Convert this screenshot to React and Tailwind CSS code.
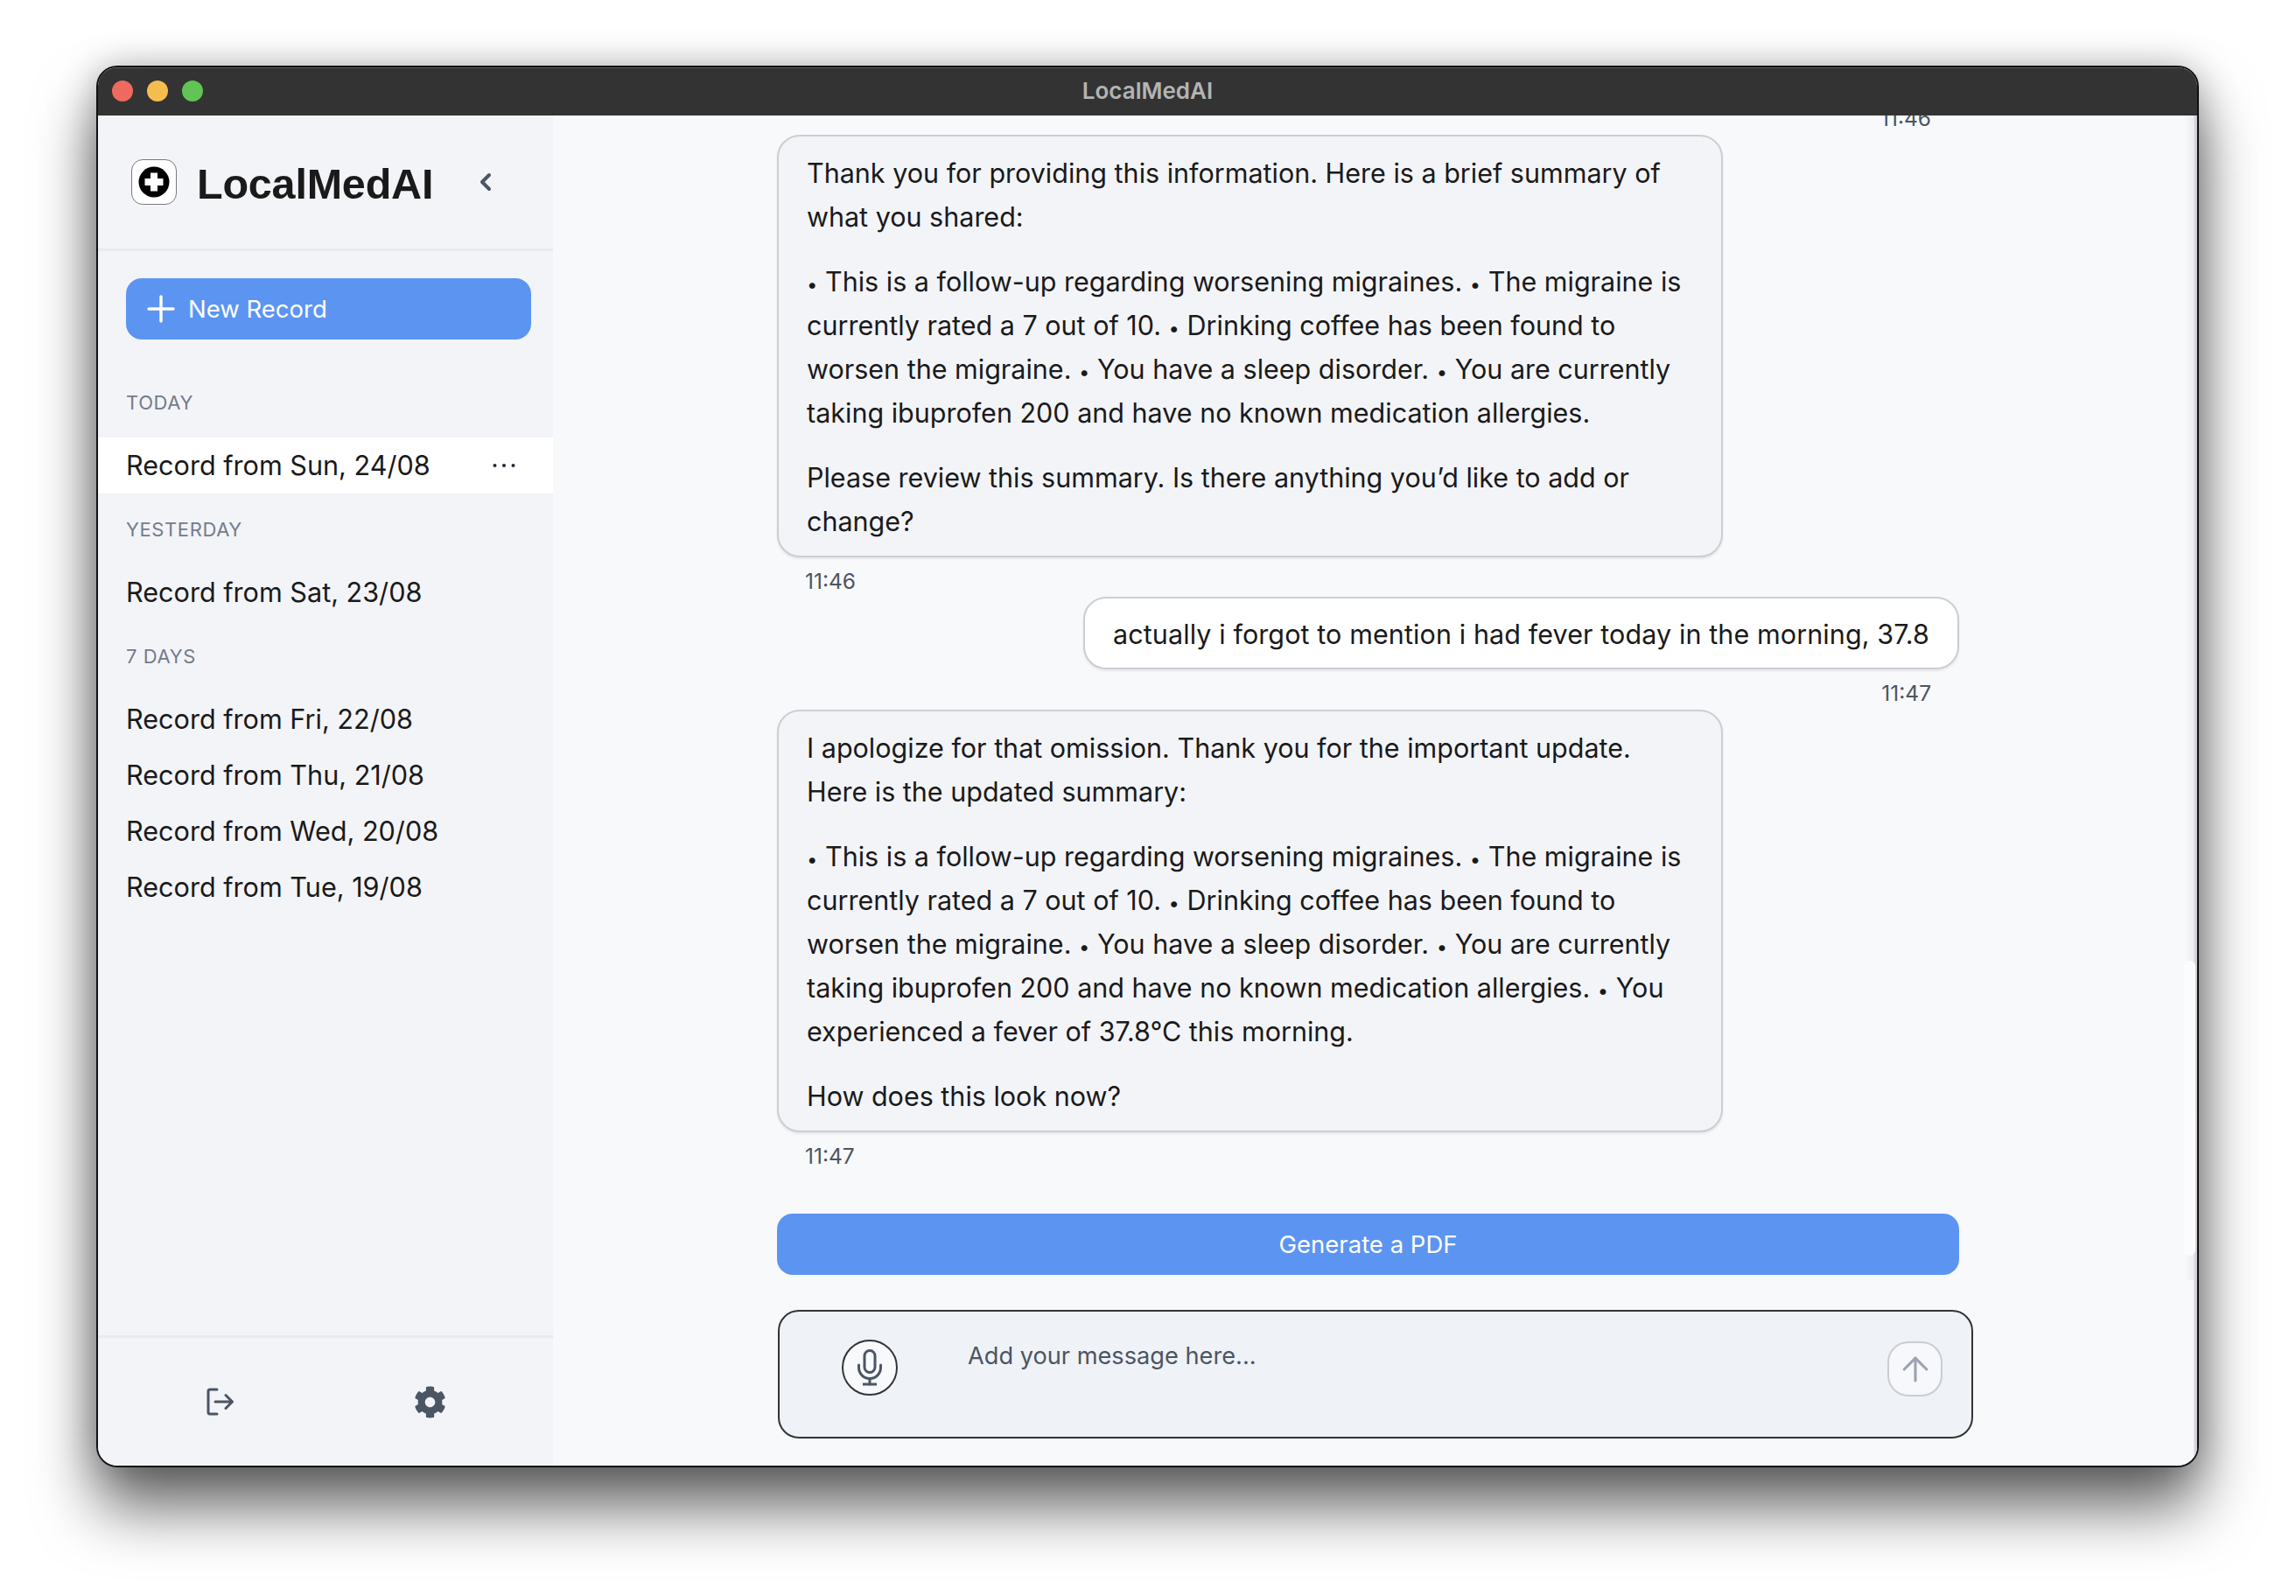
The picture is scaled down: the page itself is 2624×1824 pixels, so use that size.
import React from "react";
import { ArrowUp, Plus, ChevronLeft } from "lucide-react";
import { FaCog } from "react-icons/fa";

const FONT = "font-['Inter','Noto_Sans',sans-serif]";

function Logo() {
  return (
    <div className="flex h-[52px] w-[52px] shrink-0 items-center justify-center rounded-[13px] border border-[#77797d] bg-white">
      <svg width="36" height="36" viewBox="0 0 36 36">
        <circle cx="18" cy="18" r="17.5" fill="#000" />
        <path d="M14 7.5h8V14h6.5v8H22v6.5h-8V22H7.5v-8H14z" fill="#fff" />
      </svg>
    </div>
  );
}

function LogoutIcon() {
  return (
    <svg width="31" height="32" viewBox="0 0 31 32" fill="none" stroke="#4b5563" strokeWidth="3" strokeLinecap="round" strokeLinejoin="round">
      <path d="M12 2H4a2 2 0 0 0-2 2v24a2 2 0 0 0 2 2h8" />
      <path d="M10 16h19.5M22 8.5 29.5 16 22 23.5" />
    </svg>
  );
}

function MicIcon() {
  return (
    <svg width="28" height="42" viewBox="0 0 28 42" fill="none" stroke="#4b5563" strokeWidth="3" strokeLinecap="round">
      <rect x="8" y="1.5" width="12" height="25" rx="6" />
      <path d="M1.5 18v3a12.5 12.5 0 0 0 25 0v-3" />
      <path d="M14 34v6" />
      <path d="M6 40h16" strokeLinecap="butt" />
    </svg>
  );
}

function Dots() {
  return (
    <svg width="26" height="6" viewBox="0 0 26 6" fill="#1f2937">
      <circle cx="2.5" cy="3" r="2" />
      <circle cx="13" cy="3" r="2" />
      <circle cx="23.5" cy="3" r="2" />
    </svg>
  );
}

function GroupLabel({ children }) {
  return (
    <div className="flex h-[81px] items-center pl-[32px] text-[22px] leading-[30px] tracking-[0.6px] text-[#747c8a]">
      {children}
    </div>
  );
}

function Row({ children, active }) {
  return (
    <div className={`flex h-[64px] items-center justify-between pl-[32px] pr-[43px] text-[30.6px] leading-[48px] text-[#1a1a1a] ${active ? "bg-white" : ""}`}>
      <span>{children}</span>
      {active && <Dots />}
    </div>
  );
}

function Sidebar() {
  return (
    <aside className="flex w-[520px] shrink-0 flex-col bg-[#f3f4f8]">
      <div className="flex h-[155px] items-center border-b-[3px] border-[#e9eaef] pl-[38px]">
        <Logo />
        <span className="ml-[23px] pt-[3px] font-['Liberation_Sans',Arial,sans-serif] text-[48.5px] font-bold leading-[60px] tracking-[-0.2px] text-[#1a1a1a]">LocalMedAI</span>
        <ChevronLeft size={32} strokeWidth={3} className="ml-[44px] text-[#4b5563]" />
      </div>
      <div className="flex-1 overflow-hidden">
        <div className="px-[32px] pt-[31px]">
          <button className="flex h-[70px] w-[463px] items-center gap-[7px] rounded-[18px] bg-[#5c94f2] pl-[16px] text-[27.5px] leading-[40px] text-white">
            <Plus size={48} strokeWidth={1.7} />
            <span>New Record</span>
          </button>
        </div>
        <div className="mt-[31px]">
          <GroupLabel>TODAY</GroupLabel>
          <Row active>Record from Sun, 24/08</Row>
          <GroupLabel>YESTERDAY</GroupLabel>
          <Row>Record from Sat, 23/08</Row>
          <GroupLabel>7 DAYS</GroupLabel>
          <Row>Record from Fri, 22/08</Row>
          <Row>Record from Thu, 21/08</Row>
          <Row>Record from Wed, 20/08</Row>
          <Row>Record from Tue, 19/08</Row>
        </div>
      </div>
      <div className="flex h-[149px] items-center justify-between border-t-[3px] border-[#e9eaef] pl-[124px] pr-[122px]">
        <LogoutIcon />
        <FaCog size={37} className="text-[#4b5563]" />
      </div>
    </aside>
  );
}

function Time({ children, align }) {
  return (
    <div className={`h-[46px] shrink-0 pt-[9px] text-[24.5px] leading-[36px] text-[#4b5563] ${align === "right" ? "pr-[32px] text-right" : "pl-[32px]"}`}>
      {children}
    </div>
  );
}

function Line({ text }) {
  const parts = text.split("•");
  return (
    <span className="block h-[50px] whitespace-nowrap">
      {parts.map((p, i) => (
        <React.Fragment key={i}>
          {i > 0 && <span className="text-[22px] leading-[0]">•</span>}
          {p}
        </React.Fragment>
      ))}
    </span>
  );
}

function Bot({ paras }) {
  return (
    <div className="w-[1081px] shrink-0 rounded-[26px] border-2 border-[#cdced2] bg-[#f3f4f8] px-[32px] pb-[14px] pt-[17px] text-[30.5px] leading-[50px] text-[#1a1a1a] shadow-[0_2px_3px_rgba(0,0,0,0.08)]">
      <div className="flex flex-col gap-[24px]">
        {paras.map((lines, i) => (
          <p key={i}>
            {lines.map((l, j) => (
              <Line key={j} text={l} />
            ))}
          </p>
        ))}
      </div>
    </div>
  );
}

function Chat() {
  return (
    <main className="relative flex min-w-0 flex-1 flex-col bg-[#f8f9fb]">
      <div className="flex min-h-0 flex-1 flex-col justify-end overflow-hidden pl-[256px] pr-[272px]">
        <Time align="right">11:46</Time>
        <Bot
          paras={[
            ["Thank you for providing this information. Here is a brief summary of", "what you shared:"],
            [
              "• This is a follow-up regarding worsening migraines. • The migraine is",
              "currently rated a 7 out of 10. • Drinking coffee has been found to",
              "worsen the migraine. • You have a sleep disorder. • You are currently",
              "taking ibuprofen 200 and have no known medication allergies.",
            ],
            ["Please review this summary. Is there anything you’d like to add or", "change?"],
          ]}
        />
        <Time>11:46</Time>
        <div className="-mt-[1px] shrink-0 self-end rounded-[26px] border-2 border-[#cdced2] bg-white px-[32px] pb-[13px] pt-[16px] text-[30.5px] leading-[50px] tracking-[0.1px] text-[#1a1a1a] shadow-[0_2px_3px_rgba(0,0,0,0.08)]">
          actually i forgot to mention i had fever today in the morning, 37.8
        </div>
        <Time align="right">11:47</Time>
        <Bot
          paras={[
            ["I apologize for that omission. Thank you for the important update.", "Here is the updated summary:"],
            [
              "• This is a follow-up regarding worsening migraines. • The migraine is",
              "currently rated a 7 out of 10. • Drinking coffee has been found to",
              "worsen the migraine. • You have a sleep disorder. • You are currently",
              "taking ibuprofen 200 and have no known medication allergies. • You",
              "experienced a fever of 37.8°C this morning.",
            ],
            ["How does this look now?"],
          ]}
        />
        <Time>11:47</Time>
        <div className="h-[47px] shrink-0" />
      </div>
      <div className="pl-[256px] pr-[272px]">
        <button className="flex h-[70px] w-full items-center justify-center rounded-[18px] bg-[#5c94f2] text-[27.5px] leading-[40px] text-white">
          Generate a PDF
        </button>
      </div>
      <div className="pb-[31px] pl-[257px] pr-[256px] pt-[40px]">
        <div className="flex h-[147px] items-start rounded-[24px] border-2 border-[#333438] bg-[#eff2f7]">
          <div className="ml-[71px] mt-[32px] flex h-[64px] w-[64px] shrink-0 items-center justify-center rounded-full border-2 border-[#333438] bg-[#f8f9fb]">
            <MicIcon />
          </div>
          <div className="ml-[80px] mt-[29px] flex-1 text-[27.2px] leading-[44px] text-[#4b5563]">Add your message here...</div>
          <div className="mr-[33px] mt-[34px] flex h-[63px] w-[63px] shrink-0 items-center justify-center rounded-[24px] border-2 border-[#cbcdd1] bg-[#f6f8fb]">
            <ArrowUp size={44} strokeWidth={1.7} className="text-[#9ca3af]" />
          </div>
        </div>
      </div>
      <div className="absolute right-0 top-0 h-[1331px] w-[15px] bg-gradient-to-r from-[#f8f9fb] to-[#e8e9ed]" />
      <div className="absolute bottom-0 right-0 top-0 w-[4px] bg-gradient-to-r from-[#e4e5e9] to-[#c6c8cb]" />
      <div className="absolute right-[2px] top-[966px] h-[337px] w-[13px] rounded-[6px] bg-[#fcfcfd]" />
    </main>
  );
}

export default function App() {
  return (
    <div className={`h-[1824px] w-[2624px] overflow-hidden bg-white pl-[110px] pt-[75px] ${FONT}`}>
      <div className="flex h-[1602px] w-[2403px] flex-col overflow-hidden rounded-[24px] border-2 border-[#111] bg-[#f8f9fb] shadow-[0_46px_70px_rgba(0,0,0,0.6),0_0_40px_rgba(0,0,0,0.25)]">
        <header className="relative flex h-[55px] shrink-0 items-center justify-center bg-[#333333] shadow-[inset_0_1px_0_#5e5e5e]">
          <div className="absolute left-[16px] top-[15px] flex gap-[16px]">
            <span className="h-[24px] w-[24px] rounded-full bg-[#ee6a5f]" />
            <span className="h-[24px] w-[24px] rounded-full bg-[#f5bd4f]" />
            <span className="h-[24px] w-[24px] rounded-full bg-[#61c454]" />
          </div>
          <span className="pb-[2px] text-[26px] font-semibold leading-[36px] text-[#b4b4b4]">LocalMedAI</span>
        </header>
        <div className="flex min-h-0 flex-1">
          <Sidebar />
          <Chat />
        </div>
      </div>
    </div>
  );
}
